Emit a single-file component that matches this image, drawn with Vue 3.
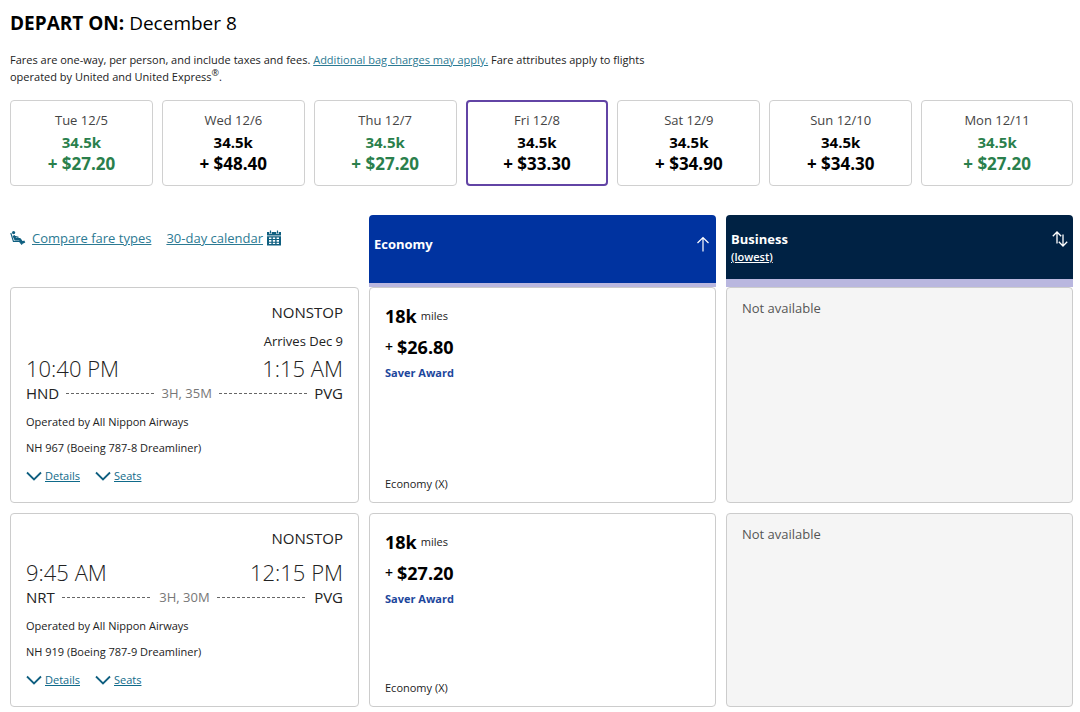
<script setup>
const days = [
  { label: 'Tue 12/5', cash: '+ $27.20', low: true },
  { label: 'Wed 12/6', cash: '+ $48.40' },
  { label: 'Thu 12/7', cash: '+ $27.20', low: true },
  { label: 'Fri 12/8', cash: '+ $33.30', selected: true },
  { label: 'Sat 12/9', cash: '+ $34.90' },
  { label: 'Sun 12/10', cash: '+ $34.30' },
  { label: 'Mon 12/11', cash: '+ $27.20', low: true },
]
const flights = [
  {
    id: 'nh967', arrives: 'Arrives Dec 9', depart: '10:40 PM', arrive: '1:15 AM',
    from: 'HND', to: 'PVG', duration: '3H, 35M', plane: 'NH 967 (Boeing 787-8 Dreamliner)', cash: '$26.80',
  },
  {
    id: 'nh919', arrives: '', depart: '9:45 AM', arrive: '12:15 PM',
    from: 'NRT', to: 'PVG', duration: '3H, 30M', plane: 'NH 919 (Boeing 787-9 Dreamliner)', cash: '$27.20',
  },
]
</script>

<template>
  <main class="page">
    <h1 class="title"><strong>DEPART ON:</strong> December 8</h1>
    <p class="note">
      Fares are one-way, per person, and include taxes and fees.
      <a href="#">Additional bag charges may apply.</a> Fare attributes apply to flights operated by United and United Express<sup>®</sup>.
    </p>

    <div class="days">
      <button v-for="d in days" :key="d.label" type="button" class="day" :class="{ low: d.low, selected: d.selected }">
        <span class="day-label">{{ d.label }}</span>
        <span class="day-miles">34.5k</span>
        <span class="day-cash">{{ d.cash }}</span>
      </button>
    </div>

    <div class="grid head">
      <div class="links">
        <a href="#" class="compare">
          <svg width="16" height="16" viewBox="0 0 16 16" aria-hidden="true">
            <circle cx="3.6" cy="2.6" r="1.6" fill="#0f5f80" />
            <path d="M.8 3 3.4 11.400h6l2.600 3.200" fill="none" stroke="#0f5f80" stroke-width="1.100" />
            <path d="M3.600 5.400 5.400 9.300h4.400l2.400 3.400 2.600-1.200" fill="none" stroke="#0f5f80" stroke-width="2.400" stroke-linejoin="round" />
            <path d="M4.500 6.400 8.500 7.400" fill="none" stroke="#0f5f80" stroke-width="1.100" />
          </svg>
          <span>Compare fare types</span>
        </a>
        <a href="#" class="calendar">
          <span>30-day calendar</span>
          <svg width="16" height="16" viewBox="0 0 16 16" aria-hidden="true">
            <path d="M1 2h14v3.500H1zM1 6.200h14v9.300H1z" fill="#0f5f80" />
            <path d="M4.500 1v3M11.500 1v3" stroke="#fff" stroke-width="2.400" />
            <path d="M4.500 .5v3M11.500 .5v3" stroke="#0f5f80" stroke-width="1.200" />
            <path d="M3 7.500h2.400v1.600H3zM6.800 7.500h2.400v1.600H6.800zM10.600 7.500H13v1.600h-2.400zM3 10.100h2.400v1.600H3zM6.800 10.100h2.400v1.600H6.800zM10.600 10.100H13v1.600h-2.400zM3 12.700h2.400v1.400H3zM6.800 12.700h2.400v1.400H6.800zM10.600 12.700H13v1.400h-2.400z" fill="#fff" />
          </svg>
        </a>
      </div>
      <div class="cabin economy">
        <span class="cabin-name">Economy</span>
        <button type="button" class="sort" aria-label="Sort by economy fare">
          <svg width="16" height="16" viewBox="0 0 16 16" aria-hidden="true">
            <path d="M8 15.500V1.500M2.500 7 8 1.500 13.500 7" fill="none" stroke="#fff" stroke-width="1.200" />
          </svg>
        </button>
      </div>
      <div class="cabin business">
        <span class="cabin-text">
          <span class="cabin-name">Business</span>
          <a href="#" class="lowest">(lowest)</a>
        </span>
        <button type="button" class="sort" aria-label="Sort by business fare">
          <svg width="16" height="16" viewBox="0 0 16 16" aria-hidden="true">
            <path d="M5 12.500V1M.8 5.200 5 1l4.200 4.200M11 3.500V15M6.800 10.800 11 15l4.200-4.200" fill="none" stroke="#fff" stroke-width="1.300" />
          </svg>
        </button>
      </div>
    </div>

    <div v-for="f in flights" :key="f.id" class="grid row">
      <section class="card flight">
        <div class="stops">NONSTOP</div>
        <div v-if="f.arrives" class="arrives">{{ f.arrives }}</div>
        <div class="times" :class="{ spaced: !f.arrives }"><span>{{ f.depart }}</span><span>{{ f.arrive }}</span></div>
        <div class="route">
          <span>{{ f.from }}</span>
          <svg class="dash" height="1" aria-hidden="true"><line x1="0" y1="0.5" x2="100%" y2="0.5" stroke="#666" stroke-dasharray="3 2" /></svg>
          <span class="duration">{{ f.duration }}</span>
          <svg class="dash" height="1" aria-hidden="true"><line x1="0" y1="0.5" x2="100%" y2="0.5" stroke="#666" stroke-dasharray="3 2" /></svg>
          <span>{{ f.to }}</span>
        </div>
        <div class="infos">
          <p class="info">Operated by All Nippon Airways</p>
          <p class="info">{{ f.plane }}</p>
        </div>
        <div class="toggles">
          <button v-for="t in ['Details', 'Seats']" :key="t" type="button" class="toggle">
            <svg width="16" height="10" viewBox="0 0 16 10" aria-hidden="true">
              <path d="M1 1.500 8 8.500 15 1.500" fill="none" stroke="#0f5f80" stroke-width="1.800" />
            </svg>
            <span>{{ t }}</span>
          </button>
        </div>
      </section>
      <section class="card fare">
        <div class="miles"><b>18k</b> <small>miles</small></div>
        <div class="cash"><span class="plus">+</span> <b>{{ f.cash }}</b></div>
        <div class="saver">Saver Award</div>
        <div class="class">Economy (X)</div>
      </section>
      <section class="card unavailable">Not available</section>
    </div>
  </main>
</template>

<style>
body {
  background: #fff;
}
</style>

<style scoped>
.page {
  box-sizing: border-box;
  padding: 9px 7px 0 10px;
  font-family: "Open Sans", "Noto Sans", sans-serif;
  font-size: 11px;
  color: #222;
}
a { color: #2c7a93; text-decoration: underline; }
button { font: inherit; background: none; border: 0; padding: 0; margin: 0; cursor: pointer; }
svg { flex: none; display: block; }
.title {
  margin: 0;
  font-size: 19px;
  line-height: 28px;
  font-weight: 500;
  color: #000;
}
.title strong { font-weight: 700; }
.note {
  margin: 14px 0 0;
  max-width: 660px;
  line-height: 17px;
}
.note sup { font-size: 9px; line-height: 0; }
.days {
  display: grid;
  grid-template-columns: repeat(7, 1fr);
  margin-top: 15px;
}
.day {
  box-sizing: border-box;
  display: flex;
  flex-direction: column;
  align-items: center;
  height: 86px;
  margin-right: 9px;
  padding-top: 9px;
  border: 1px solid #d0d0d0;
  border-radius: 4px;
  background: #fff;
  color: #000;
}
.day:last-child { margin-right: 0; }
.day.selected { border: 2px solid #6244a5; padding-top: 8px; }
.day-label { font-size: 13px; line-height: 20px; color: #444; }
.day-miles { font-size: 15px; line-height: 24px; font-weight: 700; }
.day-cash { font-size: 17px; line-height: 20px; font-weight: 700; }
.low .day-miles, .low .day-cash { color: #2a7f4c; }
.grid {
  display: grid;
  grid-template-columns: 349fr 347fr 347fr;
  gap: 10px;
}
.head { margin-top: 29px; height: 72px; }
.links {
  display: flex;
  align-items: flex-start;
  gap: 15px;
  padding-top: 13px;
  font-size: 13px;
  line-height: 20px;
}
.links a { display: flex; align-items: center; }
.compare { gap: 6px; }
.calendar { gap: 3px; }
.cabin {
  box-sizing: border-box;
  display: flex;
  justify-content: space-between;
  align-items: center;
  padding: 0 5px;
  border-radius: 4px 4px 0 0;
  color: #fff;
}
.economy { background: #0033a0; border-bottom: 4px solid #b9b7df; padding-bottom: 10px; }
.business { background: #002244; border-bottom: 8px solid #b9b7df; align-items: flex-start; padding-top: 14px; }
.cabin-text { display: flex; flex-direction: column; align-items: flex-start; }
.cabin-name { font-size: 13px; line-height: 20px; font-weight: 700; }
.sort { display: flex; align-items: center; height: 20px; }
.lowest { color: #fff; font-size: 11px; line-height: 16px; font-weight: 600; }
.row { margin-bottom: 10px; }
.card {
  box-sizing: border-box;
  border: 1px solid #ccc;
  border-radius: 4px;
  background: #fff;
  padding: 14px 15px;
}
.flight { padding-bottom: 18px; }
.stops { text-align: right; font-size: 15px; line-height: 20px; }
.arrives { text-align: right; font-size: 13px; line-height: 18px; margin-top: 10px; }
.times {
  display: flex;
  justify-content: space-between;
  font-size: 22px;
  line-height: 32px;
  font-weight: 300;
  margin-top: 2px;
}
.times.spaced { margin-top: 8px; }
.route {
  display: flex;
  align-items: center;
  gap: 7px;
  font-size: 15px;
  line-height: 18px;
}
.dash { flex: 1 1 0; min-width: 0; width: 0; }
.duration { font-size: 13px; color: #777; }
.infos { display: flex; flex-direction: column; gap: 10px; margin-top: 12px; }
.info { margin: 0; line-height: 16px; }
.toggles { display: flex; gap: 15px; margin-top: 12px; }
.toggle { display: flex; align-items: center; gap: 3px; color: #0f6a8a; line-height: 16px; }
.toggle span { text-decoration: underline; }
.fare { display: flex; flex-direction: column; }
.miles, .cash { display: flex; align-items: center; gap: 4px; line-height: 28px; color: #000; }
.cash { margin-top: 3px; }
.miles b, .cash b { font-size: 18px; }
.miles small { font-size: 11px; color: #222; }
.plus { font-size: 14px; font-weight: 600; }
.saver { margin-top: 4px; line-height: 16px; font-weight: 700; color: #1c469c; }
.class { margin-top: auto; margin-bottom: -4px; line-height: 16px; }
.unavailable { background: #f5f5f5; font-size: 13px; line-height: 20px; color: #555; padding-top: 10px; }
</style>
